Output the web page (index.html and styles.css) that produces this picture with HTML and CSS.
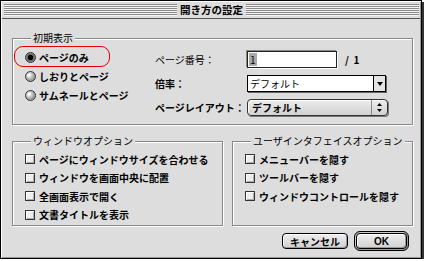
FILE: index.html
```html
<!DOCTYPE html>
<html lang="ja">
<head>
<meta charset="utf-8">
<link rel="stylesheet" href="styles.css">
</head>
<body>
<div class="win">
  <div class="titlebar">
    <span class="stripes"></span>
    <span class="title">開き方の設定</span>
    <span class="stripes"></span>
  </div>
  <div class="body">
    <fieldset class="group top">
      <legend>初期表示</legend>
      <div class="radios">
        <label class="opt first"><span class="radio on"></span>ページのみ<span class="ring"></span></label>
        <label class="opt"><span class="radio"></span>しおりとページ</label>
        <label class="opt"><span class="radio"></span>サムネールとページ</label>
      </div>
      <div class="fields">
        <span class="flabel thin">ページ番号：</span>
        <div class="ctl"><span class="edit"><span class="hl">1</span></span><span class="of">/&nbsp;&nbsp;1</span></div>
        <span class="flabel">倍率：</span>
        <div class="ctl"><span class="combo"><span class="ctext">デフォルト</span><span class="carrow"><svg width="6" height="4" viewBox="0 0 6 4"><path d="M0 0H6L3 4Z" fill="#000"/></svg></span></span></div>
        <span class="flabel">ページレイアウト：</span>
        <div class="ctl"><span class="popup"><span class="ptext">デフォルト</span><span class="parrow"><svg width="5" height="9" viewBox="0 0 5 9"><path d="M2.5 0L5 3H0Z M0 6H5L2.5 9Z" fill="#000"/></svg></span></span></div>
      </div>
    </fieldset>
    <div class="row2">
      <fieldset class="group wopts">
        <legend>ウィンドウオプション</legend>
        <label class="chk"><span class="box"></span>ページにウィンドウサイズを合わせる</label>
        <label class="chk"><span class="box"></span>ウィンドウを画面中央に配置</label>
        <label class="chk"><span class="box"></span>全画面表示で開く</label>
        <label class="chk"><span class="box"></span>文書タイトルを表示</label>
      </fieldset>
      <fieldset class="group uopts">
        <legend>ユーザインタフェイスオプション</legend>
        <label class="chk"><span class="box"></span>メニューバーを隠す</label>
        <label class="chk"><span class="box"></span>ツールバーを隠す</label>
        <label class="chk"><span class="box"></span>ウィンドウコントロールを隠す</label>
      </fieldset>
    </div>
    <div class="buttons">
      <span class="btn cancel">キャンセル</span>
      <span class="defring"><span class="btn ok">OK</span></span>
    </div>
  </div>
</div>
</body>
</html>
```

FILE: styles.css
```css
html, body {
  margin: 0;
  padding: 0;
  background: #ffffff;
}
body {
  font-family: "Noto Sans CJK JP", "Noto Sans", sans-serif;
  font-size: 10px;
  color: #000;
}
.win {
  width: 420px;
  height: 257px;
  border: 1px solid #000;
  background: #dddddd;
  box-shadow: inset 1px 1px 0 #fff, inset -1px -1px 0 #999, 2px 2px 0 #333;
  display: flex;
  flex-direction: column;
}
.titlebar {
  height: 17px;
  border-bottom: 1px solid #555;
  margin: 0 1px;
  padding: 0 1px 0 2px;
  display: flex;
  align-items: flex-start;
  background: #dddddd;
  box-shadow: inset 0 1px 0 #fff;
}
.stripes {
  flex: 1;
  height: 12px;
  margin-top: 3px;
  background: repeating-linear-gradient(to bottom, #8a8a8a 0 1px, #f4f4f4 1px 2px);
}
.title {
  font-weight: 700;
  font-size: 10.5px;
  line-height: 17px;
  padding: 0 3px;
}
.body {
  padding: 12px 8px 0 11px;
  display: flex;
  flex-direction: column;
}
.group {
  margin: 0;
  padding: 0;
  min-width: 0;
  box-sizing: border-box;
  border: 1px solid #888;
  box-shadow: 1px 1px 0 #fff, inset 1px 1px 0 #fff;
}
.group legend {
  margin-left: 6px;
  padding: 0 2px;
  line-height: 14px;
  height: 14px;
  background: #dddddd;
  font-weight: 400;
}
.top {
  width: 401px;
  height: 94px;
  display: flex;
  padding: 3px 0 0 12px;
}
.radios {
  width: 130px;
  display: flex;
  flex-direction: column;
}
.opt {
  position: relative;
  height: 19px;
  display: flex;
  align-items: center;
  gap: 3px;
  font-weight: 700;
}
.radio {
  width: 9px;
  height: 9px;
  border-radius: 50%;
  border: 1px solid #333;
  background: radial-gradient(circle at 35% 35%, #fff 0 1px, #d8d8d8 2px, #a0a0a0 5px);
  box-sizing: content-box;
  flex: none;
  position: relative;
}
.radio.on {
  background: radial-gradient(circle, #000 0 2.5px, #666 3px, #999 5px);
}
.ring {
  position: absolute;
  left: -11px;
  top: -2px;
  width: 94px;
  height: 19px;
  border: 1px solid #e00000;
  border-radius: 9px;
}
.fields {
  margin-top: 3px;
  display: grid;
  grid-template-columns: 92px auto;
  grid-auto-rows: 17px;
  row-gap: 7px;
  align-items: center;
}
.flabel {
  font-weight: 700;
  line-height: 17px;
}
.flabel.thin {
  font-weight: 400;
}
.ctl {
  display: flex;
  align-items: center;
  height: 17px;
}
.edit {
  width: 87px;
  height: 15px;
  border: 1px solid #222;
  background: #fff;
  box-shadow: -1px -1px 0 #888, 1px 1px 0 #fff;
  display: flex;
  align-items: center;
  padding-left: 1px;
  box-sizing: content-box;
}
.hl {
  background: #aaaaaa;
  line-height: 13px;
  padding: 0 1px;
  font-weight: 400;
}
.of {
  margin-left: 8px;
  font-weight: 700;
}
.combo {
  width: 137px;
  height: 15px;
  border: 1px solid #000;
  background: #fff;
  box-shadow: 1px 1px 0 #666;
  display: flex;
  align-items: center;
}
.ctext {
  flex: 1;
  padding-left: 2px;
  font-weight: 400;
}
.carrow {
  width: 11px;
  height: 15px;
  border-left: 1px solid #000;
  background: #e4e4e4;
  display: flex;
  align-items: center;
  justify-content: center;
}
.popup {
  width: 139px;
  height: 15px;
  border: 1px solid #333;
  border-radius: 4px;
  background: linear-gradient(#ececec, #d2d2d2);
  box-shadow: inset 1px 1px 0 #fff, 1px 1px 0 #777;
  display: flex;
  align-items: center;
}
.ptext {
  flex: 1;
  padding-left: 4px;
  font-weight: 700;
}
.parrow {
  width: 15px;
  height: 15px;
  border-left: 1px solid #888;
  display: flex;
  align-items: center;
  justify-content: center;
}
.row2 {
  margin-top: 9px;
  display: flex;
  gap: 9px;
}
.wopts, .uopts {
  height: 92px;
  padding: 2px 0 0 12px;
  display: flex;
  flex-direction: column;
}
.wopts { width: 211px; }
.uopts { width: 181px; }
.chk {
  height: 18.5px;
  display: flex;
  align-items: center;
  gap: 4px;
  font-weight: 700;
}
.box {
  width: 8px;
  height: 8px;
  border: 1px solid #333;
  background: #eeeeee;
  box-shadow: inset 1px 1px 0 #fff, inset -1px -1px 0 #aaa;
  flex: none;
}
.buttons {
  margin-top: 5px;
  margin-right: 4px;
  display: flex;
  justify-content: flex-end;
  align-items: center;
  gap: 6px;
  height: 20px;
}
.btn {
  box-sizing: border-box;
  height: 16px;
  border: 1px solid #000;
  border-radius: 4px;
  background: linear-gradient(#eeeeee, #d0d0d0);
  box-shadow: inset 1px 1px 0 #fff, inset -1px -1px 0 #999;
  display: flex;
  align-items: center;
  justify-content: center;
  font-weight: 700;
}
.cancel {
  width: 66px;
}
.defring {
  box-sizing: border-box;
  width: 55px;
  height: 20px;
  border: 1px solid #000;
  border-radius: 6px;
  background: #999999;
  box-shadow: inset 1px 1px 0 #ccc;
  padding: 1px;
  display: flex;
}
.ok {
  flex: 1;
  height: 16px;
  font-family: "Liberation Sans", sans-serif;
}
```
